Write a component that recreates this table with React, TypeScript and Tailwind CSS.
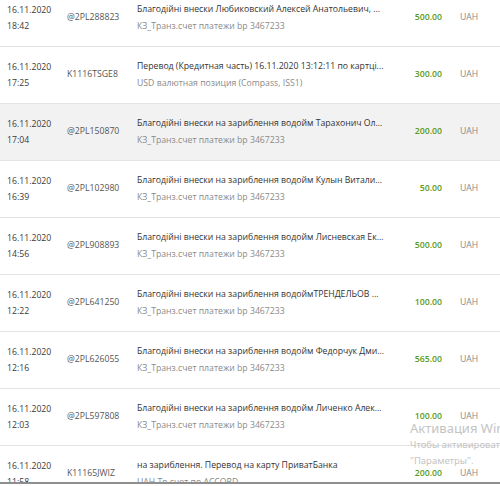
import React from "react";

type Row = { d: string; t: string; id: string; l1: string; l2: string; amt: string; hl?: boolean };

const rows: Row[] = [
  { d: "16.11.2020", t: "18:42", id: "@2PL288823", l1: "Благодійні внески Любиковский Алексей Анатольевич, ...", l2: "КЗ_Транз.счет платежи bp 3467233", amt: "500.00" },
  { d: "16.11.2020", t: "17:25", id: "K1116TSGE8", l1: "Перевод (Кредитная часть) 16.11.2020 13:12:11 по картці...", l2: "USD валютная позиция (Compass, ISS1)", amt: "300.00" },
  { d: "16.11.2020", t: "17:04", id: "@2PL150870", l1: "Благодійні внески на зариблення водойм Тарахонич Ол...", l2: "КЗ_Транз.счет платежи bp 3467233", amt: "200.00", hl: true },
  { d: "16.11.2020", t: "16:39", id: "@2PL102980", l1: "Благодійні внески на зариблення водойм Кулын Витали...", l2: "КЗ_Транз.счет платежи bp 3467233", amt: "50.00" },
  { d: "16.11.2020", t: "14:56", id: "@2PL908893", l1: "Благодійні внески на зариблення водойм Лисневская Ек...", l2: "КЗ_Транз.счет платежи bp 3467233", amt: "500.00" },
  { d: "16.11.2020", t: "12:22", id: "@2PL641250", l1: "Благодійні внески на зариблення водоймТРЕНДЕЛЬОВ ...", l2: "КЗ_Транз.счет платежи bp 3467233", amt: "100.00" },
  { d: "16.11.2020", t: "12:16", id: "@2PL626055", l1: "Благодійні внески на зариблення водойм Федорчук Дми...", l2: "КЗ_Транз.счет платежи bp 3467233", amt: "565.00" },
  { d: "16.11.2020", t: "12:03", id: "@2PL597808", l1: "Благодійні внески на зариблення водойм Личенко Алек...", l2: "КЗ_Транз.счет платежи bp 3467233", amt: "100.00" },
  { d: "16.11.2020", t: "11:58", id: "K11165JWIZ", l1: "на зариблення. Перевод на карту ПриватБанка", l2: "UAH Тр.счет по ACCORD", amt: "200.00" },
];

export default function App() {
  return (
    <div className="relative h-[486px] w-[500px] overflow-hidden bg-white" style={{ fontFamily: '"Open Sans", "Noto Sans", sans-serif' }}>
      <div className="h-[484px] overflow-hidden border-b-2 border-[#8e8e8e]">
        <div className="mt-[-10px]">
          {rows.map((r, i) => (
            <div
              key={i}
              className={`flex h-[57px] items-center border-b border-[#e3e3e3] text-[8.7px] ${r.hl ? "bg-[#f2f2f2]" : "bg-white"}`}
            >
              <div className="w-[67px] shrink-0 pl-[7px] leading-[16px] text-[#3a3a3a]">
                <div>{r.d}</div>
                <div>{r.t}</div>
              </div>
              <div className="w-[70px] shrink-0 text-[#555]">{r.id}</div>
              <div className="w-[270px] shrink-0 leading-[17px]">
                <div className="whitespace-nowrap text-[#333]">{r.l1}</div>
                <div className="whitespace-nowrap text-[#8a8a8a]">{r.l2}</div>
              </div>
              <div className="w-[35px] shrink-0 text-right font-semibold text-[#5b9a1c]">{r.amt}</div>
              <div className="shrink-0 pl-[18px] text-[#8a8a8a]">UAH</div>
            </div>
          ))}
        </div>
      </div>
      <div className="pointer-events-none absolute left-[410px] top-[420px] whitespace-nowrap text-[#c4c4c4]" style={{ fontFamily: '"Noto Sans", "Open Sans", sans-serif' }}>
        <div className="text-[13px] leading-[17px]">Активация Windows</div>
        <div className="text-[9.5px] leading-[16px]">Чтобы активировать Windows, перейдите в раздел</div>
        <div className="text-[9.5px] leading-[16px]">"Параметры".</div>
      </div>
    </div>
  );
}
